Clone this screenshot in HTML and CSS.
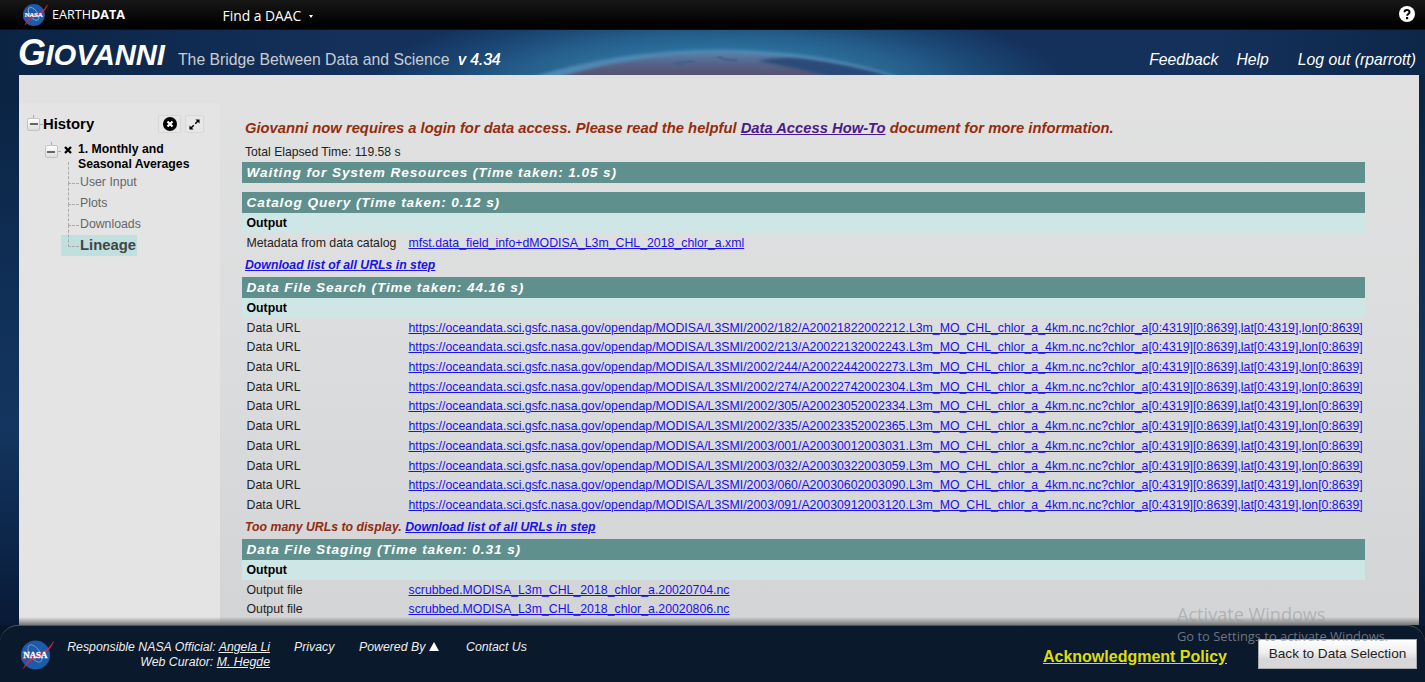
FILE: index.html
```
<!DOCTYPE html>
<html lang="en">
<head>
<meta charset="utf-8">
<title>Giovanni</title>
<link rel="stylesheet" href="styles.css">
</head>
<body>
<div class="topbar">
  <svg class="top-logo" viewBox="0 0 34 32">
    <circle cx="15.500" cy="16" r="14.600" fill="#1d5aa8"/>
    <ellipse cx="15" cy="14.500" rx="10" ry="5" fill="none" stroke="#b9cdea" stroke-width=".8" transform="rotate(55 15 14.500)"/>
    <path d="M1 20.500C8 17 14 16.500 20 14.500C26 12.500 30 8 33.500 2.500C31 10 26 14 19 17C12 20 7 24 3.500 29.500C7 22 12 18.500 18 15.800C12 17.500 7 18.500 1 20.500Z" fill="#e0263c" stroke="#e0263c" stroke-width=".6"/>
    <text class="nasa" x="3.300" y="19" textLength="24" lengthAdjust="spacingAndGlyphs">NASA</text>
  </svg>
  <span class="brand">EARTH<b>DATA</b></span>
  <span class="daac">Find a DAAC</span><i class="caret"></i>
  <span class="help-dot"><svg viewBox="0 0 16 16"><circle cx="8" cy="8" r="8" fill="#fff"/><path d="M5.500 6.300C5.500 3.200 10.500 3.200 10.500 6.200C10.500 8 8.100 7.900 8.100 9.700" fill="none" stroke="#000" stroke-width="2"/><rect x="7" y="11" width="2.200" height="2.200" fill="#000"/></svg></span>
</div>
<header class="header">
  <svg class="earth" viewBox="0 0 560 45" preserveAspectRatio="none">
    <defs>
      <linearGradient id="globe" x1="0" y1="0" x2="0" y2="1"><stop offset="0" stop-color="#587fa6"/><stop offset=".45" stop-color="#566187"/><stop offset="1" stop-color="#564f69"/></linearGradient>
      <filter id="soft"><feGaussianBlur stdDeviation="1.400"/></filter>
    </defs>
    <path d="M112 47Q200 20 300 19.500Q400 20 480 47Z" fill="#5088b2" filter="url(#soft)"/>
    <path d="M136 48Q215 24 300 23Q390 24 466 48Z" fill="url(#globe)" filter="url(#soft)"/>
    <path d="M338 31Q360 26 385 29Q425 34 472 46L412 47Q372 37 338 31Z" fill="#2c4b79" filter="url(#soft)"/>
    <path d="M252 34l8-3l12-1l5 2l-10 1l-7 3zM295 27l6-1l4 2l13 1l-2 3l-12-1z" fill="#42618c" opacity=".7"/>
  </svg>
  <h1 class="title"><span>G</span>IOVANNI</h1>
  <span class="tagline">The Bridge Between Data and Science</span>
  <em class="version">v 4.34</em>
  <nav class="top-links"><a>Feedback</a><a>Help</a><a>Log out (rparrott)</a></nav>
</header>
<main class="main">
  <aside class="side">
    <div class="history">
      <i class="toggle"></i><b>History</b>
      <span class="btn close"><svg viewBox="0 0 14 14"><circle cx="7" cy="7" r="7"/><path d="M4.500 4.500l5 5M9.500 4.500l-5 5" stroke="#fff" stroke-width="2.200"/></svg></span>
      <span class="btn"><svg viewBox="0 0 12 12"><path d="M7 0.500H11.500V5ZM5 11.500H.5V7Z"/><path d="M9.800 2.200L6.800 5.200M5.200 6.800L2.200 9.800" stroke="#000" stroke-width="1.600"/></svg></span>
    </div>
    <div class="session">
      <i class="toggle"></i>
      <svg class="x" viewBox="0 0 8 8"><path d="M1 1L7 7M7 1L1 7" stroke="#000" stroke-width="2.300"/></svg>
      <b>1. Monthly and<br>Seasonal Averages</b>
    </div>
    <ul class="tree"><li>User Input</li><li>Plots</li><li>Downloads</li><li class="on">Lineage</li></ul>
  </aside>
  <section class="content">
    <p class="notice"><span>Giovanni now requires a login for data access. Please read the helpful <a>Data Access How-To</a> document for more information.</span></p>
    <p class="elapsed">Total Elapsed Time: 119.58 s</p>
    <h2 class="first">Waiting for System Resources (Time taken: 1.05 s)</h2>
    <h2>Catalog Query (Time taken: 0.12 s)</h2>
    <h3>Output</h3>
    <div class="row"><span>Metadata from data catalog</span><a>mfst.data_field_info+dMODISA_L3m_CHL_2018_chlor_a.xml</a></div>
    <p class="dl"><a>Download list of all URLs in step</a></p>
    <h2>Data File Search (Time taken: 44.16 s)</h2>
    <h3>Output</h3>
    <div class="row"><span>Data URL</span><a>https://oceandata.sci.gsfc.nasa.gov/opendap/MODISA/L3SMI/2002/182/A20021822002212.L3m_MO_CHL_chlor_a_4km.nc.nc?chlor_a[0:4319][0:8639],lat[0:4319],lon[0:8639]</a></div>
    <div class="row"><span>Data URL</span><a>https://oceandata.sci.gsfc.nasa.gov/opendap/MODISA/L3SMI/2002/213/A20022132002243.L3m_MO_CHL_chlor_a_4km.nc.nc?chlor_a[0:4319][0:8639],lat[0:4319],lon[0:8639]</a></div>
    <div class="row"><span>Data URL</span><a>https://oceandata.sci.gsfc.nasa.gov/opendap/MODISA/L3SMI/2002/244/A20022442002273.L3m_MO_CHL_chlor_a_4km.nc.nc?chlor_a[0:4319][0:8639],lat[0:4319],lon[0:8639]</a></div>
    <div class="row"><span>Data URL</span><a>https://oceandata.sci.gsfc.nasa.gov/opendap/MODISA/L3SMI/2002/274/A20022742002304.L3m_MO_CHL_chlor_a_4km.nc.nc?chlor_a[0:4319][0:8639],lat[0:4319],lon[0:8639]</a></div>
    <div class="row"><span>Data URL</span><a>https://oceandata.sci.gsfc.nasa.gov/opendap/MODISA/L3SMI/2002/305/A20023052002334.L3m_MO_CHL_chlor_a_4km.nc.nc?chlor_a[0:4319][0:8639],lat[0:4319],lon[0:8639]</a></div>
    <div class="row"><span>Data URL</span><a>https://oceandata.sci.gsfc.nasa.gov/opendap/MODISA/L3SMI/2002/335/A20023352002365.L3m_MO_CHL_chlor_a_4km.nc.nc?chlor_a[0:4319][0:8639],lat[0:4319],lon[0:8639]</a></div>
    <div class="row"><span>Data URL</span><a>https://oceandata.sci.gsfc.nasa.gov/opendap/MODISA/L3SMI/2003/001/A20030012003031.L3m_MO_CHL_chlor_a_4km.nc.nc?chlor_a[0:4319][0:8639],lat[0:4319],lon[0:8639]</a></div>
    <div class="row"><span>Data URL</span><a>https://oceandata.sci.gsfc.nasa.gov/opendap/MODISA/L3SMI/2003/032/A20030322003059.L3m_MO_CHL_chlor_a_4km.nc.nc?chlor_a[0:4319][0:8639],lat[0:4319],lon[0:8639]</a></div>
    <div class="row"><span>Data URL</span><a>https://oceandata.sci.gsfc.nasa.gov/opendap/MODISA/L3SMI/2003/060/A20030602003090.L3m_MO_CHL_chlor_a_4km.nc.nc?chlor_a[0:4319][0:8639],lat[0:4319],lon[0:8639]</a></div>
    <div class="row"><span>Data URL</span><a>https://oceandata.sci.gsfc.nasa.gov/opendap/MODISA/L3SMI/2003/091/A20030912003120.L3m_MO_CHL_chlor_a_4km.nc.nc?chlor_a[0:4319][0:8639],lat[0:4319],lon[0:8639]</a></div>
    <p class="dl">Too many URLs to display. <a>Download list of all URLs in step</a></p>
    <h2>Data File Staging (Time taken: 0.31 s)</h2>
    <h3>Output</h3>
    <div class="row"><span>Output file</span><a>scrubbed.MODISA_L3m_CHL_2018_chlor_a.20020704.nc</a></div>
    <div class="row"><span>Output file</span><a>scrubbed.MODISA_L3m_CHL_2018_chlor_a.20020806.nc</a></div>
  </section>
  <div class="shade"></div>
</main>
<footer class="footer">
  <svg class="foot-logo" viewBox="0 0 34 32">
    <circle cx="15.500" cy="16" r="14.600" fill="#1d5aa8"/>
    <ellipse cx="15" cy="14.500" rx="10" ry="5" fill="none" stroke="#9db8e0" stroke-width=".6" transform="rotate(55 15 14.500)"/>
    <path d="M1 20.500C8 17 14 16.500 20 14.500C26 12.500 30 8 33.500 2.500C31 10 26 14 19 17C12 20 7 24 3.500 29.500C7 22 12 18.500 18 15.800C12 17.500 7 18.500 1 20.500Z" fill="#e0263c" stroke="#e0263c" stroke-width=".5"/>
    <text class="nasa" x="3.300" y="19" textLength="24" lengthAdjust="spacingAndGlyphs">NASA</text>
  </svg>
  <div class="officials">Responsible NASA Official: <u>Angela Li</u><br>Web Curator: <u>M. Hegde</u></div>
  <span class="privacy">Privacy</span>
  <span class="powered">Powered By <svg viewBox="0 0 10 9"><path d="M5 0L10 9H0Z" fill="#fff"/></svg></span>
  <span>Contact Us</span>
  <a class="policy">Acknowledgment Policy</a>
  <span class="back">Back to Data Selection</span>
</footer>
<div class="activate"><div>Activate Windows</div><p>Go to Settings to activate Windows.</p></div>
</body>
</html>
```
FILE: styles.css
```
* { box-sizing: border-box; }
body { margin: 0; width: 1425px; height: 682px; overflow: hidden; position: relative; font-family: "Liberation Sans", Arial, sans-serif; background: linear-gradient(180deg, #0b2444 0, #0b2444 100px, #103058 300px, #13355f 430px, #0e294e 520px, #081a36 625px, #081526 626px); display: flex; flex-direction: column; white-space: nowrap; }
p, h1, h2, h3, ul { margin: 0; padding: 0; }
.topbar { height: 30px; background: linear-gradient(#171717, #000 90%); border-bottom: 1px solid #07101c; color: #fff; display: flex; align-items: center; font-family: "Open Sans", "Noto Sans", sans-serif; }
.nasa { font: bold 9px "Liberation Serif", serif; fill: #fff; stroke: #fff; stroke-width: .3px; }
.top-logo { width: 26px; height: 24px; margin-left: 22px; }
.brand { margin-left: 4px; font-size: 12.600px; width: 170.500px; }
.daac { font-size: 13.850px; padding-top: 2px; }
.caret { border: 2px solid transparent; border-top: 3px solid #fff; border-bottom: 0; margin: 4px 0 0 8px; }
.help-dot { margin-left: auto; margin-right: 10px; height: 16px; margin-bottom: 2px; }
.help-dot svg { width: 16px; height: 16px; display: block; }
.header { height: 45px; position: relative; display: flex; align-items: baseline; color: #fff; background: radial-gradient(ellipse 345px 82px at 718px 52px, #307aa8 0, #2d74a0 35%, #265f8c 58%, #1b4774 78%, rgba(20,50,95,0) 100%), linear-gradient(90deg, #0b2444 0, #14315c 25%, #14315c 85%, #0d2748 100%); }
.earth { position: absolute; left: 420px; top: 0; width: 560px; height: 45px; }
.title { font-size: 29.200px; line-height: 45px; font-style: italic; font-weight: bold; margin-left: 18px; width: 160px; }
.title span { font-size: 36px; margin-right: -.5px; }
.tagline { font-size: 15.750px; color: #c9cdd2; width: 280px; position: relative; }
.version { font-size: 15.600px; position: relative; text-shadow: .3px 0 0 #fff; }
.top-links { margin-left: auto; margin-right: 9px; display: flex; font-style: italic; font-size: 15.750px; }
.top-links a + a { margin-left: 18px; }
.top-links a:last-child { margin-left: 29px; }
.main { height: 550px; margin: 0 6px 0 19px; position: relative; background: linear-gradient(#e1e1e1, #dcddde 45%, #d3d4d6); display: flex; overflow: hidden; }
.side { width: 201px; margin-top: 28px; background: #e4e4e4; }
.history { display: flex; align-items: center; height: 42px; padding-left: 8px; font-size: 14.850px; }
.history b { width: 115px; margin-left: 3px; }
.toggle { width: 13px; height: 13px; border: 1px solid #c3c3c3; border-radius: 2px; background: linear-gradient(#666, #666) 50% 50%/8px 2px no-repeat, linear-gradient(#fff, #ddd); flex: none; position: relative; }
.toggle::before { content: ""; position: absolute; left: 5px; top: -4px; width: 1px; height: 3px; background: #aaa; }
.toggle::after { content: ""; position: absolute; left: 12px; top: 5px; width: 3px; height: 1px; background: #aaa; }
.btn { width: 19px; height: 18px; border: 1px solid #d8d8d8; border-radius: 2px; display: flex; align-items: center; justify-content: center; background: #e7e7e7; }
.btn.close { width: 23px; flex: none; margin-right: 4px; }
.btn svg { width: 11px; height: 11px; flex: none; }
.btn.close svg { width: 14px; height: 14px; }
.session { display: flex; height: 30px; padding-left: 25.500px; margin-top: -3px; font-size: 12.250px; line-height: 15px; }
.session .toggle { margin-top: 3px; }
.session .x { width: 8px; height: 8px; margin: 4px 6px 0 6px; flex: none; }
.session b { margin-left: .5px; }
.tree { list-style: none; margin-left: 42px; width: 76px; font-size: 12.300px; color: #666; }
.tree li { height: 21px; line-height: 21px; padding-left: 19px; position: relative; }
.tree li::before { content: ""; position: absolute; left: 7px; top: -10px; width: 10px; height: 21px; border-left: 1px dashed #aaa; border-bottom: 1px dashed #aaa; }
.tree .on { background: #bfe0df; font-size: 14.850px; font-weight: bold; color: #444; }
.content { margin-left: 22px; width: 1123px; font-size: 12.320px; color: #222; }
a { text-decoration: underline; }
.top-links a { text-decoration: none; }
.notice { padding: 42px 0 0 3px; height: 66px; line-height: 22px; font-size: 14.770px; font-weight: bold; font-style: italic; color: #942c0c; }
.notice a { color: #4b1a8c; }
.elapsed { padding: 2px 0 0 3px; height: 20.500px; line-height: 18px; font-size: 12.200px; }
h2 { height: 21px; line-height: 21px; padding-left: 4.500px; background: #5f908e; color: #fff; font-size: 13.600px; font-style: italic; letter-spacing: .91px; }
.first { margin-bottom: 9.500px; }
h3 { height: 20px; line-height: 20px; padding-left: 4.500px; background: #cfe6e6; color: #000; font-size: 12.320px; }
.row { display: flex; height: 19.700px; line-height: 21.400px; padding-left: 4.500px; }
.row span { width: 162px; flex: none; }
.row a, .dl a { color: #1a12e8; }
.dl { height: 24px; line-height: 25px; padding-left: 3px; font-size: 12.290px; font-weight: bold; font-style: italic; color: #942c0c; }
.shade { position: absolute; left: 0; right: 0; bottom: 0; height: 8px; background: linear-gradient(rgba(100,100,100,0), #777); }
.footer { height: 57px; background: #0a192b; border-top: 1px solid #4b535d; border-radius: 18px 18px 0 0; color: #eee; font-size: 12.300px; font-style: italic; display: flex; align-items: flex-start; padding-top: 14px; line-height: 15px; }
.foot-logo { width: 34px; height: 32px; margin-left: 20px; margin-top: -1px; }
.officials { width: 204px; margin-left: 12px; text-align: right; }
.privacy { margin-left: 24px; width: 65px; }
.powered { width: 107px; }
.powered svg { width: 10px; height: 9px; }
.policy { margin-left: auto; font-size: 16px; font-weight: bold; font-style: normal; color: #dbdf09; line-height: 22px; margin-top: 6px; }
.back { width: 159px; height: 30px; margin: -1px 8px 0 31px; background: linear-gradient(#fff, #eee 45%, #d7d7d9 70%); border: 1px solid #aaa; color: #222; font-size: 13.600px; font-style: normal; text-align: center; line-height: 28px; }
.activate { position: absolute; left: 1177px; top: 602px; font-family: "Open Sans", "Noto Sans", sans-serif; color: rgba(150,150,150,.55); font-size: 18.100px; line-height: 24px; }
.activate p { font-size: 12.900px; line-height: 21px; color: rgba(145,150,155,.75); }
```
